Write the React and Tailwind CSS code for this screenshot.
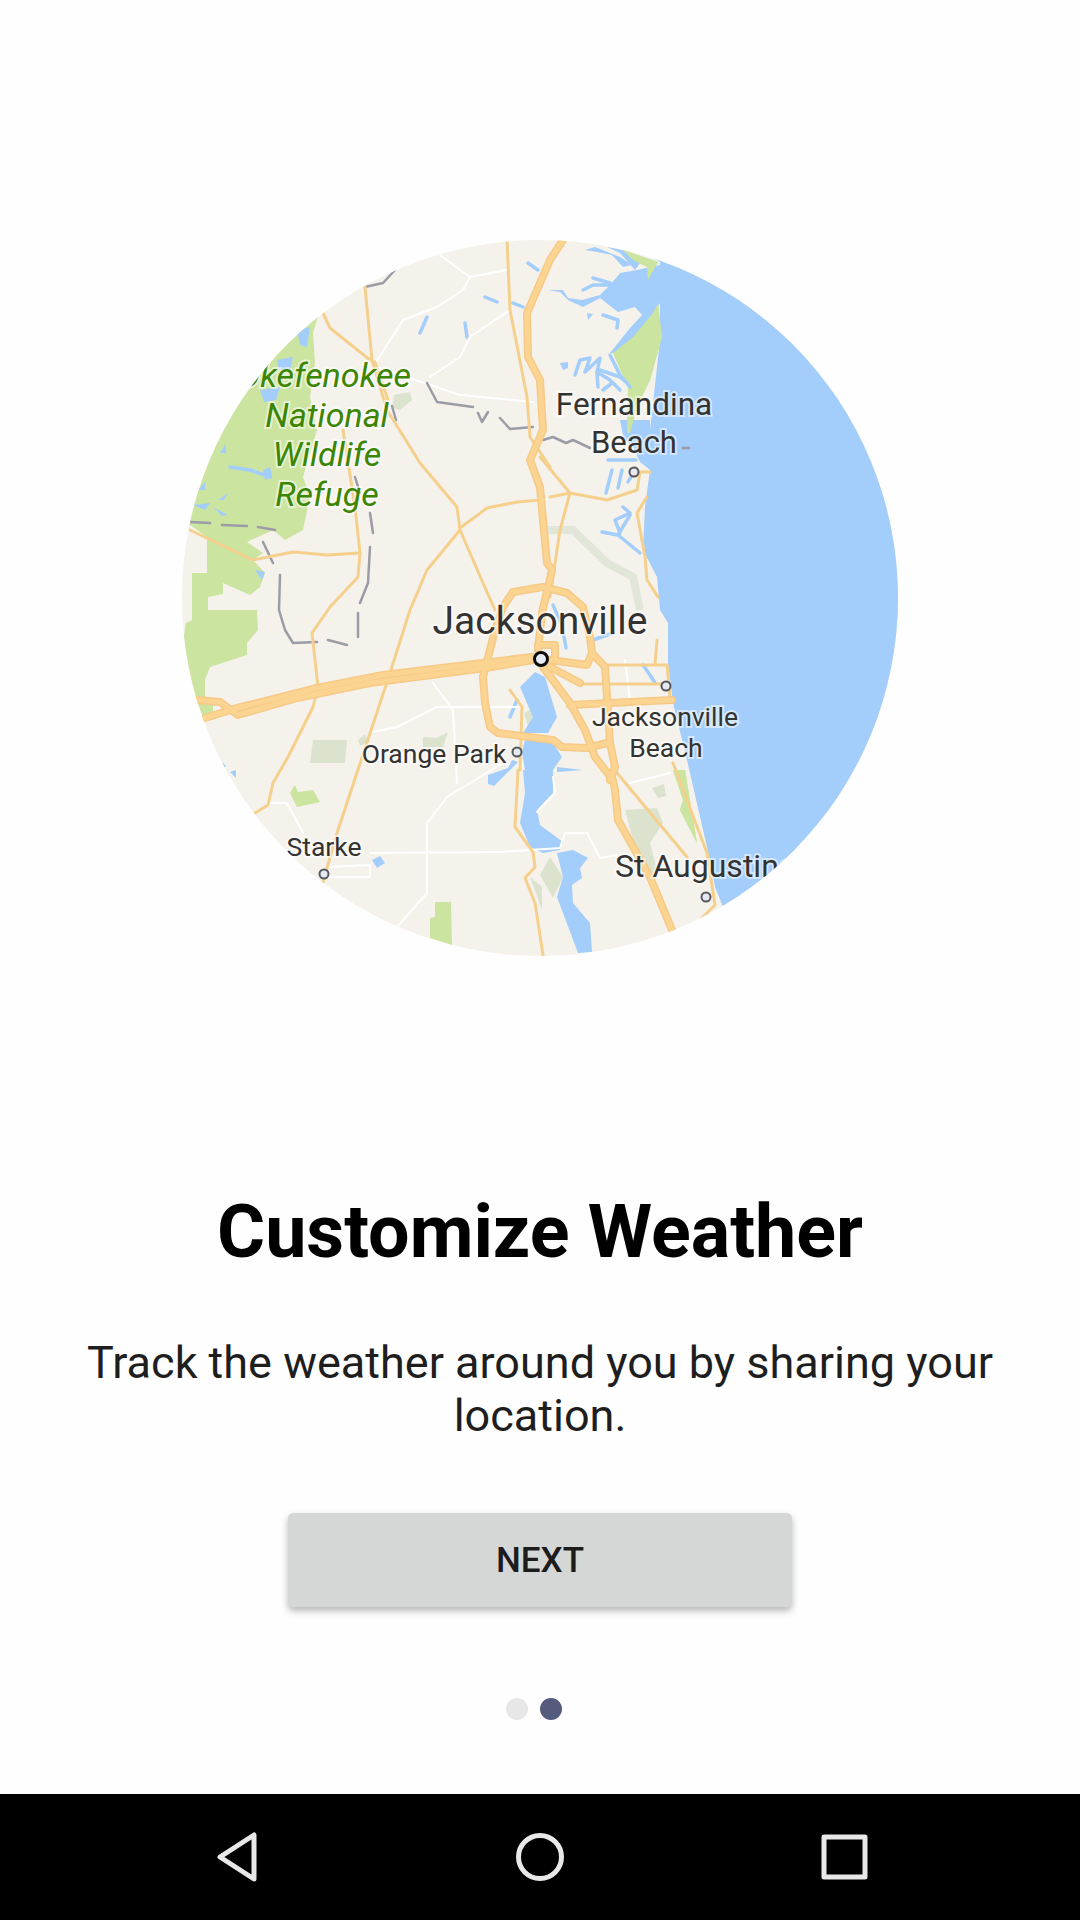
import React from "react";

const WATER = "#a3cdfa";
const GREEN = "#cbe4a0";

// everything in page coordinates, the svg viewBox starts at the circle's corner
const OCEAN =
  "M623 240L900 240L900 960L722 960L723 907L715 887L707 847L687 760L673 703L668 663L668 623L660 610L657 577L643 550L645 507L650 470L650 430L660 340L660 262Z";

const LAKES = [
  // marsh behind Fernandina
  "M637 270L660 265L660 303L640 340L615 353L610 353L630 328L642 315L635 307L618 312L600 298L583 307L568 300L560 292L548 290L563 290L568 298L582 300L600 295L612 283L620 273Z",
  "M585 250L595 247L620 257L632 265L623 267L612 255L597 252Z",
  "M607 247L623 250L640 263L635 270L620 253Z",
  "M587 313L593 314L588 320Z",
  "M560 363L568 362L568 368L563 370Z",
  "M620 420L650 420L650 470L640 462L632 445L624 440Z",
  // St Johns river
  "M535 672L545 677L557 717L548 733L523 733L533 717L520 687Z",
  "M525 740L553 743L562 757L553 770L525 770L522 752Z",
  "M523 770L553 770L553 793L537 810L540 825L563 842L560 850L543 853L530 847L520 823L525 793Z",
  "M557 853L573 850L588 858L580 868L582 878L572 885L573 903L590 923L592 952L578 953L557 897L563 877Z",
  "M557 767L583 770L557 772Z",
  "M372 860L380 856L385 863L377 868Z",
  "M488 775L508 768L512 760L518 762L505 775L494 786L488 784Z",
  // swamp
  "M297 330L310 327L307 347L300 345Z",
  "M277 360L293 357L290 370L279 370Z",
  "M260 390L280 387L276 400L264 402Z",
  "M263 470L270 467L272 477L265 480Z",
  "M220 453L226 443L226 453Z",
  "M198 490L205 482L205 490Z",
  "M218 500L228 493L224 500Z",
  "M193 505L210 503L205 510Z",
  "M213 507L228 515L222 516Z",
  "M255 570L265 572L262 580Z",
  "M222 762L226 766L224 768Z",
  "M230 772L236 770L236 778Z",
];

const INLETS = [
  "M583 290L593 285L612 285L622 275M593 278L610 283",
  "M603 315L618 320L617 328",
  "M575 375L580 360L590 358L585 372L600 358L597 372L610 380L620 390",
  "M610 355L620 375L630 387M600 370L620 377L627 383M597 373L598 387M603 390L612 383",
  "M608 460L636 460M606 493L612 470M618 488L622 470M628 482L636 468",
  "M623 507L630 513L615 520L620 533M602 532L618 535L640 553M618 535L630 515",
  "M553 605L562 625L566 648M593 640L613 633M643 665L650 675L655 683",
  "M230 467L250 470L270 477",
  "M528 263L538 270M485 297L497 302M513 303L523 307M465 323L467 337M420 333L427 317",
  "M510 717L517 700",
];

const PARK_GREEN = [
  "M318 316L313 333L315 363L310 397L317 430L303 477L310 497L303 530L285 540L273 530L247 542L263 553L253 560L265 573L260 587L250 595L223 583L223 594L208 597L208 610L257 610L258 630L247 643L247 655L210 667L205 680L205 697L213 700L213 715L203 717L180 660L186 623L192 620L192 573L207 573L207 537L190 525L170 525L170 318Z",
  "M658 303L662 337L650 380L637 407L630 433L627 433L628 387L613 353L633 337L653 313Z",
  "M623 250L658 262L648 280L647 267L633 260Z",
  "M673 770L685 770L697 843L680 810L683 800Z",
  "M295 785L298 792L313 790L320 802L297 807L290 793Z",
  "M435 902L451 902L452 945L430 938L430 918L435 917Z",
];

const PARK_GREY = [
  "M313 740L347 740L345 763L310 763Z",
  "M423 737L437 738L448 732L443 747L423 747Z",
  "M358 740L365 734L368 742L360 746Z",
  "M394 395L410 392L412 400L400 410L392 408Z",
  "M625 810L657 808L663 823L650 843L657 870L647 877L633 840Z",
  "M540 875L550 857L563 877L553 898Z",
  "M530 877L542 887L542 910Z",
  "M652 788L664 784L666 796L658 798Z",
  "M524 713L533 708L538 722L528 726Z",
];

const WHITE_ROADS = [
  "M437 253L470 277L507 270M470 277L463 290L437 307L403 320L373 367",
  "M510 310L470 337L460 357L430 377M377 367L460 395L533 402",
  "M373 732L397 727L437 707L520 707M433 683L453 710L457 783",
  "M503 763L447 797L427 823L427 893L397 927M370 853L500 852L530 850L560 848L565 833L587 833L600 858L617 855",
  "M327 867L370 865L370 877L327 877M268 803L287 803L303 833",
  "M553 777L555 793L537 812M630 783L670 773",
  "M625 660L630 700",
];

const MINOR_ROADS = [
  "M507 240L510 310L527 397L530 437L550 467",
  "M323 313L330 328L370 360M365 287L372 360L387 410L420 463L457 507L460 530L483 583L495 610",
  "M460 530L427 570L410 610L390 673L337 833L323 882",
  "M460 528L487 508L517 502L540 500",
  "M190 530L253 560L293 552L327 555L360 553L358 577L330 607L312 633L318 687L313 707L288 757L273 783L268 805L255 813",
  "M343 430L355 507L360 553",
  "M510 690L522 707L520 770L518 770L515 827L533 852L535 867L525 878L535 903L543 955",
  "M540 457L570 493L560 530L550 597M550 497L570 493L607 500L637 490L640 472L650 472",
  "M647 497L637 513L645 557L647 580L658 597",
  "M580 684L667 684M608 665L667 665L670 697M657 640L655 665",
  "M617 773L687 857M673 763L707 853L715 905L700 920",
  "M375 362L388 400",
];

const MAJOR_ROADS = [
  "M563 240L550 260L527 313L528 357L540 380L543 430L530 460L540 487L547 563L552 570L542 613L538 650",
  "M483 677L485 703L490 727L498 733L553 740L562 747L587 748L607 743",
  "M483 677L495 630L503 607L513 592L543 587L567 593L583 607L590 637L592 653L605 667L607 697L610 743L615 767L610 780",
  "M197 700L220 702L238 715L297 698L370 683L485 668L533 660",
  "M205 718L237 708L317 688L383 675L532 657",
  "M543 667L570 703L585 730L595 757L613 780L615 790L618 820L650 877L672 930",
  "M550 660L587 665L592 653M550 667L580 683",
  "M570 705L672 700",
  "M538 645L555 645L555 660",
];

const MARSH_GREY = "M540 530L573 530L607 563L633 577L640 610";

const BORDERS = [
  "M190 522L210 523M222 525L247 526M258 527L275 530",
  "M263 542L273 563M280 575L279 610L285 630L293 643L317 642M328 640L347 645",
  "M358 613L358 637M370 547L368 583L360 603M370 513L373 533M355 477L360 493",
  "M365 287L383 283L395 270",
  "M427 383L437 402L473 407M478 413L482 422L488 412M500 418L510 429L533 427",
  "M543 440L553 437L566 443L573 440L590 448M683 448L689 448",
  "M396 420L392 406",
];

const CITY_DOTS = [
  [634, 472, 4.5],
  [666, 686, 4.5],
  [517, 752, 4.5],
  [324, 874, 4.5],
  [706, 897, 4.5],
];

const LABELS = [
  { text: "Okefenokee", x: 411, y: 387, size: 34, end: true, green: true },
  { text: "National", x: 327, y: 427, size: 34, green: true },
  { text: "Wildlife", x: 327, y: 466, size: 34, green: true },
  { text: "Refuge", x: 327, y: 506, size: 34, green: true },
  { text: "Fernandina", x: 634, y: 415, size: 31.5 },
  { text: "Beach", x: 634, y: 453, size: 31 },
  { text: "Jacksonville", x: 540, y: 634, size: 39 },
  { text: "Orange Park", x: 434, y: 763, size: 26.5 },
  { text: "Starke", x: 324, y: 856, size: 26.5 },
  { text: "Jacksonville", x: 665, y: 726, size: 26.5 },
  { text: "Beach", x: 666, y: 757, size: 26.5 },
  { text: "St Augustine", x: 615, y: 877, size: 32, start: true },
];

function PathGroup({ paths, ...props }) {
  return (
    <g fill="none" strokeLinejoin="round" strokeLinecap="round" {...props}>
      {paths.map((d, i) => (
        <path key={i} d={d} />
      ))}
    </g>
  );
}

function WeatherMap() {
  return (
    <div className="w-[716px] h-[716px] mx-auto rounded-full overflow-hidden bg-[#f5f2ec]">
      <svg viewBox="182 240 716 716" width="716" height="716" className="block">
        {PARK_GREY.map((d, i) => (
          <path key={i} d={d} fill="#dbe3cf" />
        ))}
        <path d={MARSH_GREY} fill="none" stroke="#e2e6d8" strokeWidth="8" />
        {PARK_GREEN.map((d, i) => (
          <path key={i} d={d} fill={GREEN} />
        ))}
        <path d={OCEAN} fill={WATER} />
        {LAKES.map((d, i) => (
          <path key={i} d={d} fill={WATER} />
        ))}
        <path d={PARK_GREEN[1]} fill={GREEN} />
        <path d={PARK_GREEN[2]} fill={GREEN} />
        <path d={PARK_GREEN[3]} fill={GREEN} />
        <PathGroup paths={INLETS} stroke={WATER} strokeWidth="3.5" />
        <PathGroup paths={WHITE_ROADS} stroke="#ffffff" strokeWidth="2" />
        <PathGroup paths={BORDERS} stroke="#9c9ca6" strokeWidth="2.5" />
        <PathGroup paths={MINOR_ROADS} stroke="#f5d08c" strokeWidth="3" />
        <PathGroup paths={MAJOR_ROADS} stroke="#f6c986" strokeWidth="8" />
        <PathGroup paths={MAJOR_ROADS} stroke="#fcd492" strokeWidth="5" />

        {LABELS.map((l) => (
          <text
            key={l.text + l.y}
            x={l.x}
            y={l.y}
            fontSize={l.size}
            textAnchor={l.end ? "end" : l.start ? "start" : "middle"}
            fontStyle={l.green ? "italic" : "normal"}
            fill={l.green ? "#3c8500" : "#333331"}
            stroke="#ffffff"
            strokeOpacity="0.55"
            strokeWidth="4"
            paintOrder="stroke"
            className="font-['Roboto',sans-serif]"
          >
            {l.text}
          </text>
        ))}

        {CITY_DOTS.map(([cx, cy, r]) => (
          <circle key={cx} cx={cx} cy={cy} r={r} fill="#e6e8f2" stroke="#55585c" strokeWidth="2" />
        ))}
        <circle cx="541" cy="659" r="6.5" fill="#e8eaf4" stroke="#0c0c0c" strokeWidth="3" />
      </svg>
    </div>
  );
}

function NavBar() {
  return (
    <div className="h-[126px] bg-black flex items-center justify-between pl-[215px] pr-[212px]">
      <svg width="44" height="52" viewBox="0 0 44 52" fill="none" stroke="#e8e8e8" strokeWidth="5" strokeLinejoin="round">
        <path d="M39 4V48L5 26Z" />
      </svg>
      <svg width="50" height="50" viewBox="0 0 50 50" fill="none" stroke="#e8e8e8" strokeWidth="5">
        <circle cx="25" cy="25" r="21.5" />
      </svg>
      <svg width="47" height="46" viewBox="0 0 47 46" fill="none" stroke="#e8e8e8" strokeWidth="5" strokeLinejoin="round">
        <path d="M3 3H44V43H3Z" />
      </svg>
    </div>
  );
}

export default function App() {
  return (
    <div className="w-[1080px] h-[1920px] bg-[#fefefe] flex flex-col font-['Roboto',sans-serif]">
      <div className="flex-1 pt-[240px]">
        <WeatherMap />

        <h1 className="mt-[234px] text-center text-[73.6px] leading-[84px] font-bold text-black">
          Customize Weather
        </h1>

        <p className="mt-[62px] px-[60px] text-center text-[45px] leading-[53px] text-[#1e1e1e]">
          Track the weather around you by sharing your location.
        </p>

        <button className="block mt-[71px] mx-auto w-[504px] h-[94px] pt-[2px] rounded-[5px] bg-[#d5d7d6] shadow-[0_4px_7px_rgba(0,0,0,0.28)] text-[35px] font-medium text-[#1c1c1c]">
          NEXT
        </button>

        <div className="mt-[91px] pr-[12px] flex justify-center gap-[12px]">
          <span className="w-[22px] h-[22px] rounded-full bg-[#e7e7e7]" />
          <span className="w-[22px] h-[22px] rounded-full bg-[#545b7d]" />
        </div>
      </div>

      <NavBar />
    </div>
  );
}
